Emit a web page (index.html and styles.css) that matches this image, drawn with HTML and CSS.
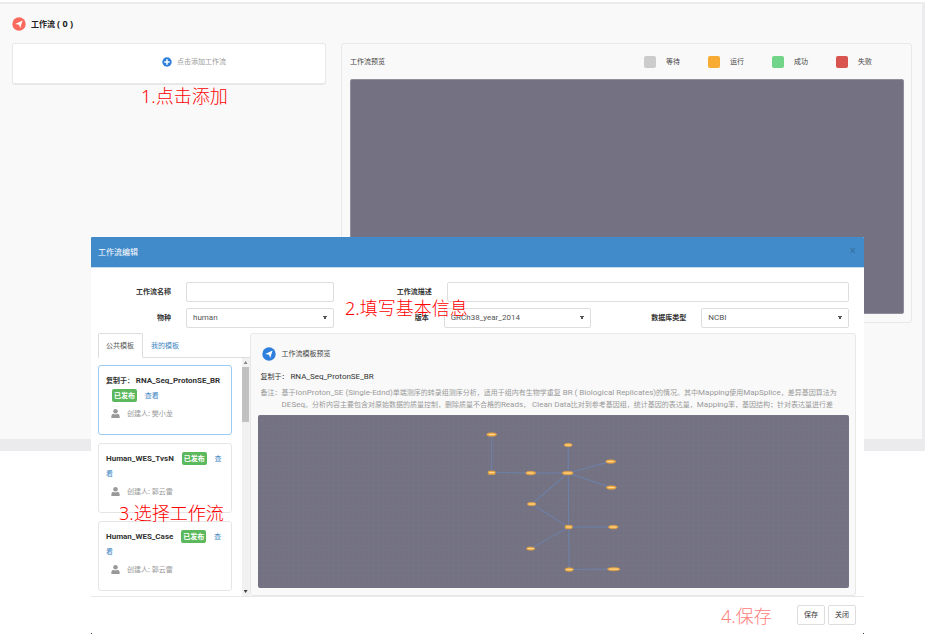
FILE: index.html
```
<!DOCTYPE html>
<html lang="zh-CN">
<head>
<meta charset="utf-8">
<title>工作流</title>
<link rel="stylesheet" href="styles.css">
</head>
<body>
<main class="page">
  <h1 class="page-title">
    <svg class="badge-icon" viewBox="0 0 14 14" aria-hidden="true"><circle cx="7" cy="7" r="6.7" fill="#f9695d"/><path d="M3.2 7 10.6 3.6 8.2 11 7 7.8z" fill="#fff"/></svg>
    <span>工作流 <span class="count">( 0 )</span></span>
  </h1>
  <div class="columns">
    <button type="button" class="add-box">
      <svg class="plus-icon" viewBox="0 0 10 10" aria-hidden="true"><circle cx="5" cy="5" r="4.7" fill="#2f7fdc"/><path d="M5 2.3v5.4M2.3 5h5.4" stroke="#fff" stroke-width="1.5"/></svg>
      点击添加工作流
    </button>
    <section class="panel overview">
      <div class="overview-head">
        <h2 class="panel-title">工作流预览</h2>
        <ul class="legend">
          <li><i class="swatch waiting"></i>等待</li>
          <li><i class="swatch running"></i>运行</li>
          <li><i class="swatch success"></i>成功</li>
          <li><i class="swatch failed"></i>失败</li>
        </ul>
      </div>
      <div class="overview-canvas"></div>
    </section>
  </div>
</main>

<section class="modal" role="dialog" aria-labelledby="modal-title">
  <header class="modal-head">
    <h2 id="modal-title">工作流编辑</h2>
    <button type="button" class="close" aria-label="关闭">×</button>
  </header>
  <form class="form">
    <div class="field">
      <label for="wf-name">工作流名称</label>
      <input id="wf-name" type="text">
    </div>
    <div class="field wide">
      <label for="wf-desc">工作流描述</label>
      <input id="wf-desc" type="text">
    </div>
    <div class="field">
      <label for="species">物种</label>
      <select id="species"><option>human</option></select>
    </div>
    <div class="field">
      <label for="version">版本</label>
      <select id="version"><option>GRCh38_year_2014</option></select>
    </div>
    <div class="field">
      <label for="db">数据库类型</label>
      <select id="db"><option>NCBI</option></select>
    </div>
  </form>
  <div class="modal-body">
    <div class="templates">
      <nav class="tabs">
        <a class="tab active" href="#public">公共模板</a>
        <a class="tab" href="#mine">我的模板</a>
      </nav>
      <div class="list-area">
        <div class="cards">
          <article class="card selected">
            <div class="card-line"><strong>复制于： <span class="latin">RNA_Seq_ProtonSE_BR</span></strong> <span class="status">已发布</span> <a href="#view">查看</a></div>
            <div class="owner"><svg class="user-icon" viewBox="0 0 10 10" aria-hidden="true"><circle cx="5" cy="2.6" r="2.5"/><path d="M.4 10V7.8Q.6 5.6 2.8 5.2 5 6.8 7.2 5.2 9.4 5.6 9.6 7.8V10z"/></svg>创建人: 樊小龙</div>
          </article>
          <article class="card">
            <div class="card-line"><strong class="latin">Human_WES_TvsN</strong> <span class="status">已发布</span> <a href="#view">查看</a></div>
            <div class="owner"><svg class="user-icon" viewBox="0 0 10 10" aria-hidden="true"><circle cx="5" cy="2.6" r="2.5"/><path d="M.4 10V7.8Q.6 5.6 2.8 5.2 5 6.8 7.2 5.2 9.4 5.6 9.6 7.8V10z"/></svg>创建人: 郭云雷</div>
          </article>
          <article class="card">
            <div class="card-line"><strong class="latin">Human_WES_Case</strong> <span class="status">已发布</span> <a href="#view">查看</a></div>
            <div class="owner"><svg class="user-icon" viewBox="0 0 10 10" aria-hidden="true"><circle cx="5" cy="2.6" r="2.5"/><path d="M.4 10V7.8Q.6 5.6 2.8 5.2 5 6.8 7.2 5.2 9.4 5.6 9.6 7.8V10z"/></svg>创建人: 郭云雷</div>
          </article>
        </div>
        <div class="scrollbar" aria-hidden="true">
          <i class="arrow up"></i><i class="thumb"></i><i class="arrow down"></i>
        </div>
      </div>
    </div>
    <section class="panel preview">
      <h3 class="preview-title">
        <svg class="badge-icon" viewBox="0 0 14 14" aria-hidden="true"><circle cx="7" cy="7" r="6.7" fill="#2f7fdc"/><path d="M3.2 7 10.6 3.6 8.2 11 7 7.8z" fill="#fff"/></svg>
        工作流模板预览
      </h3>
      <p class="source">复制于： <span class="latin">RNA_Seq_ProtonSE_BR</span></p>
      <div class="remark">
        <span>备注：</span>
        <p>基于<span class="latin">IonProton_SE (Single-Ednd)</span>单端测序的转录组测序分析，适用于组内有生物学重复 <span class="latin">BR ( Biological Replicates)</span>的情况。其中<span class="latin">Mapping</span>使用<span class="latin">MapSplice</span>，差异基因算法为<br><span class="latin">DESeq</span>。分析内容主要包含对原始数据的质量控制，删除质量不合格的<span class="latin">Reads</span>，<span class="latin"> Clean Data</span>比对到参考基因组，统计基因的表达量，<span class="latin">Mapping</span>率，基因结构；针对表达量进行差</p>
      </div>
      <div class="graph">
        <svg viewBox="0 0 591 173" aria-hidden="true">
          <g stroke="#6d82ab" stroke-width="1" fill="none">
            <path d="M233.5 19.5V57.5L272.5 58H309.5"/>
            <path d="M310 30V58L310.5 112 311 154.5 355.5 154"/>
            <path d="M352.5 46.5 309.5 58 353 72.5"/>
            <path d="M309.5 58 273.5 89 310.5 112H355"/>
            <path d="M310.5 112 272.5 133.5"/>
          </g>
          <g fill="#f3ad42" stroke="#dfa04a" stroke-width=".6">
            <ellipse cx="233.5" cy="19.5" rx="5" ry="1.8"/>
            <rect x="230" y="56" width="7" height="3.4" rx="1"/>
            <ellipse cx="272.5" cy="58" rx="5" ry="1.8"/>
            <ellipse cx="309.5" cy="58" rx="5.5" ry="1.8"/>
            <ellipse cx="310" cy="30" rx="4" ry="1.7"/>
            <ellipse cx="352.5" cy="46.5" rx="5" ry="1.8"/>
            <ellipse cx="353" cy="72.5" rx="5" ry="1.8"/>
            <ellipse cx="273.5" cy="89" rx="4.3" ry="1.7"/>
            <rect x="307" y="110.3" width="7" height="3.4" rx="1"/>
            <ellipse cx="355" cy="112" rx="4.8" ry="1.8"/>
            <ellipse cx="272.5" cy="133.5" rx="4.2" ry="1.7"/>
            <ellipse cx="311" cy="154.5" rx="4.2" ry="1.8"/>
            <ellipse cx="355.5" cy="154" rx="6.3" ry="1.7"/>
          </g>
          <path d="M230.5 19.5h6M231 57.5h5M269 58h6M306 58h7M307 30h6M349 46.5h6M350 72.5h6M270.5 89h6M308 112h5M352 112h6M269.5 133.5h6M308 154.5h6M351 154h9" stroke="#ffdf9e" stroke-width=".9"/>
        </svg>
      </div>
    </section>
  </div>
  <footer class="modal-foot">
    <button type="button">保存</button>
    <button type="button">关闭</button>
  </footer>
</section>

<p class="note note-add">1.点击添加</p>
<p class="note note-form">2.填写基本信息</p>
<p class="note note-pick">3.选择工作流</p>
<p class="note note-save">4.保存</p>
</body>
</html>
```
FILE: styles.css
```
* {
  box-sizing: border-box;
}

body {
  margin: 0;
  background: #fff;
  color: #444;
  font: 7px/12px "Noto Sans", "Noto Sans CJK SC", sans-serif;
}

h1, h2, h3, p, ul {
  margin: 0;
  padding: 0;
  font-size: inherit;
  font-weight: normal;
}

button, input, select {
  font: inherit;
  color: inherit;
}

a {
  color: #3d85c2;
  text-decoration: none;
}

.latin {
  font-family: Roboto, "Noto Sans", sans-serif;
  font-size: 8px;
}

.page {
  margin-top: 2px;
  padding: 12px 10px 116px 12px;
  background: #f9f9f9;
  border-top: 2px solid #ececec;
  border-right: 3px solid #ececee;
  border-bottom: 12px solid #ebebee;
}

.page-title {
  display: flex;
  align-items: center;
  gap: 5px;
  height: 15px;
  margin-bottom: 12px;
  color: #222;
  font-size: 8px;
  font-weight: bold;
}

.count {
  font-size: 9px;
}

.badge-icon {
  width: 14px;
  height: 14px;
}

.columns {
  display: grid;
  grid-template-columns: 11fr 20fr;
  align-items: start;
  gap: 15px;
}

.panel {
  background: #f9f9f9;
  border: 1px solid #e8e8e8;
  border-radius: 3px;
}

.add-box {
  display: flex;
  align-items: center;
  justify-content: center;
  gap: 5px;
  height: 42px;
  padding: 0 0 4px 50px;
  background: #fff;
  border: 1px solid #e8e8e8;
  border-bottom-width: 2px;
  border-radius: 3px;
  color: #999;
}

.plus-icon {
  width: 10px;
  height: 10px;
}

.overview {
  padding: 8px 7px 8px 8px;
}

.overview-head {
  display: flex;
  align-items: center;
  justify-content: space-between;
  height: 20px;
  margin-bottom: 7px;
}

.legend {
  display: flex;
  gap: 28px;
  padding-right: 32px;
  list-style: none;
}

.legend li {
  display: flex;
  align-items: center;
  gap: 10px;
  width: 36px;
  white-space: nowrap;
}

.swatch {
  flex: none;
  width: 12px;
  height: 12px;
  border-radius: 2px;
}

.waiting { background: #ccc; }
.running { background: #f7ab32; }
.success { background: #71d488; }
.failed { background: #d9534f; }

.overview-canvas {
  height: 235px;
  background: #737182;
  border: 1px solid #8f8e9b;
  border-radius: 2px;
}

.modal {
  position: absolute;
  top: 237px;
  left: 91px;
  right: 61px;
  background: #fff;
}

.modal::before,
.modal::after {
  content: "";
  position: absolute;
  bottom: 0;
  width: 1px;
  height: 1px;
  background: #444;
}

.modal::before { left: 0; }
.modal::after { right: 0; }

.modal-head {
  display: flex;
  align-items: center;
  justify-content: space-between;
  height: 31px;
  padding: 0 8px 0 7px;
  background: #428bca;
  border-bottom: 1px solid #c5dcef;
  border-radius: 1px 1px 0 0;
  color: #fff;
  font-size: 8px;
}

.close {
  padding: 0 0 2px;
  background: none;
  border: 0;
  color: #35709f;
  font-size: 12px;
}

.form {
  display: grid;
  grid-template-columns: repeat(3, 1fr);
  gap: 6px 0;
  padding-top: 14px;
}

.field {
  display: flex;
  align-items: center;
  gap: 15px;
  padding-right: 15px;
}

.field.wide {
  grid-column: span 2;
}

.field label {
  flex: none;
  width: 80px;
  color: #333;
  font-weight: bold;
  text-align: right;
}

.field.wide label {
  width: 83px;
}

.field input,
.field select {
  flex: 1;
  min-width: 0;
  height: 20px;
  padding: 0 6px;
  background: #fff;
  border: 1px solid #ddd;
  border-radius: 2px;
  color: #555;
  font-family: Roboto, "Noto Sans", sans-serif;
  font-size: 8px;
}

.field select {
  appearance: none;
  background-image: linear-gradient(to bottom right, #555 50%, transparent 50%), linear-gradient(to bottom left, #555 50%, transparent 50%);
  background-position: right 6px center, right 8px center;
  background-repeat: no-repeat;
  background-size: 2px 4px;
}

.modal-body {
  display: grid;
  grid-template-columns: 1fr 4fr;
  height: 269px;
  padding: 5px 8px 1px 7px;
  border-bottom: 1px solid #e8e8e8;
}

.templates {
  display: flex;
  flex-direction: column;
  min-height: 0;
}

.tabs {
  display: flex;
  height: 25px;
  border-bottom: 1px solid #ddd;
}

.tab {
  height: 25px;
  padding: 0 7px;
  border: 1px solid transparent;
  line-height: 24px;
}

.tab.active {
  background: #fff;
  border-color: #ddd #ddd #fff;
  border-radius: 2px 2px 0 0;
  color: #555;
  padding: 0 8px 0 7px;
}

.list-area {
  display: flex;
  flex: 1;
  justify-content: space-between;
  gap: 10px;
  min-height: 0;
}

.cards {
  flex: 1;
  padding-top: 7px;
  overflow: hidden;
}

.card {
  height: 70px;
  margin-bottom: 8px;
  padding: 7px 6px 0 7px;
  border: 1px solid #e5e5e5;
  border-radius: 3px;
}

.card.selected {
  border-color: #9dcbf2;
}

.card-line {
  line-height: 15px;
  color: #333;
}

.status {
  display: inline-block;
  height: 13px;
  margin-left: 6px;
  padding: 0 2px;
  background: #5cb85c;
  border-radius: 2px;
  color: #fff;
  font-weight: bold;
  line-height: 13px;
}

.card-line a {
  margin-left: 6px;
}

.owner {
  display: flex;
  align-items: center;
  gap: 7px;
  height: 21px;
  padding-left: 5px;
  color: #999;
}

.user-icon {
  width: 9px;
  height: 9px;
  fill: #999;
}

.scrollbar {
  display: flex;
  flex-direction: column;
  align-items: center;
  width: 8px;
  background: #f1f1f1;
}

.arrow {
  width: 4px;
  height: 3px;
  margin: 3px 0;
  background: #888;
}

.arrow.up { clip-path: polygon(50% 0, 100% 100%, 0 100%); }

.arrow.down {
  margin-top: auto;
  background: #444;
  clip-path: polygon(0 0, 100% 0, 50% 100%);
}

.thumb {
  width: 7px;
  height: 55px;
  background: #c1c1c1;
}

.preview {
  min-width: 0;
  padding: 13px 6px 7px 7px;
}

.preview-title {
  display: flex;
  align-items: center;
  gap: 6px;
  height: 14px;
  padding-left: 4px;
}

.source {
  margin: 10px 3px 4px;
  color: #333;
}

.remark {
  display: flex;
  height: 21px;
  margin: 0 3px 7px;
  overflow: hidden;
  color: #999;
  white-space: nowrap;
}

.graph {
  background-color: #737182;
  background-image: linear-gradient(90deg, #757485 1px, transparent 1px), linear-gradient(#757485 1px, transparent 1px);
  background-size: 5px 5px;
  border-radius: 2px;
}

.graph svg {
  display: block;
  width: 100%;
}

.modal-foot {
  display: flex;
  justify-content: flex-end;
  gap: 3px;
  padding: 8px 8px 9px;
}

.modal-foot button {
  height: 20px;
  padding: 0 6px;
  background: #fff;
  border: 1px solid #ddd;
  border-radius: 2px;
  color: #333;
}

.note {
  position: absolute;
  color: #f00;
  font-size: 18px;
  font-weight: 300;
  line-height: 20px;
  white-space: nowrap;
}

.note-add { top: 86px; left: 141px; }
.note-form { top: 298px; left: 345px; }
.note-pick { top: 503px; left: 119px; }
.note-save { top: 606px; left: 721px; color: #ff8080; }
```
